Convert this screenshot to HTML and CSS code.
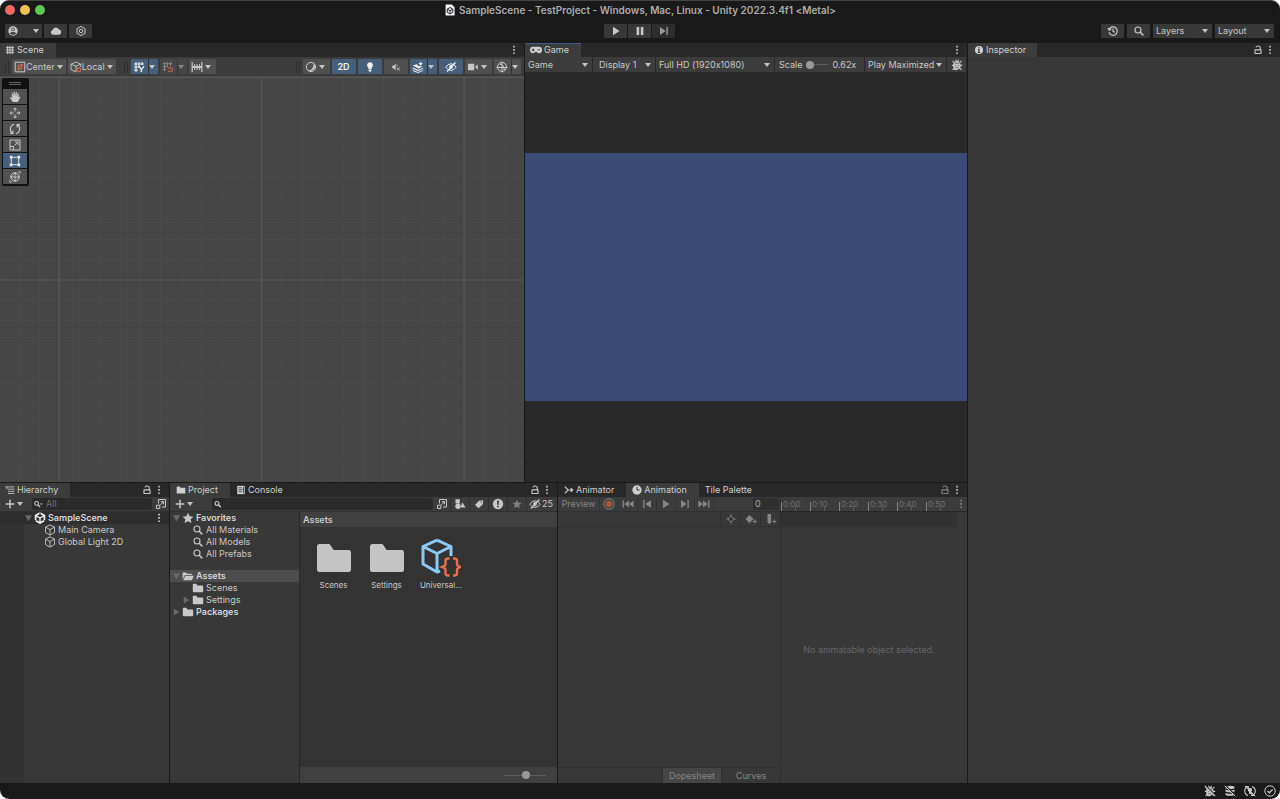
FILE: index.html
```html
<!DOCTYPE html>
<html lang="en">
<head>
  <meta charset="UTF-8">
  <title>SampleScene - TestProject - Windows, Mac, Linux - Unity 2022.3.4f1 &lt;Metal&gt;</title>
  <link rel="stylesheet" href="styles.css">
</head>
<body>
  <svg class="sprite" aria-hidden="true">
    <symbol id="i-user" viewBox="0 0 12 12"><circle cx="6" cy="6" r="4.7" fill="currentColor"/><circle cx="6" cy="4.4" r="1.8" fill="#383838"/><path d="M2.8 8.6Q3 6.9 6 6.9T9.2 8.6L8.2 9.3Q6 10.2 3.8 9.3z" fill="#383838"/><circle cx="6" cy="4.4" r="1.1" fill="currentColor"/></symbol>
    <symbol id="i-cloud" viewBox="0 0 12 12"><path d="M3 9.8a2.5 2.5 0 0 1-.3-4.9A3.3 3.3 0 0 1 8.7 4.2a2.9 2.9 0 0 1 .6 5.6z" fill="currentColor"/></symbol>
    <symbol id="i-hex" viewBox="0 0 12 12"><path d="M6 1.4L10 3.7v4.6L6 10.600 2 8.3V3.7z" fill="none" stroke="currentColor"/><circle cx="6" cy="6" r="1.8" fill="none" stroke="currentColor"/></symbol>
    <symbol id="i-play" viewBox="0 0 12 12"><path d="M3 1.8v8.4L9.5 6z" fill="currentColor"/></symbol>
    <symbol id="i-pause" viewBox="0 0 12 12"><path d="M2.6 2h2.6v8H2.6zM6.8 2h2.6v8H6.8z" fill="currentColor"/></symbol>
    <symbol id="i-next" viewBox="0 0 12 12"><path d="M2 2v8l5.6-4zM8.4 2h1.4v8H8.4z" fill="currentColor"/></symbol>
    <symbol id="i-prev" viewBox="0 0 12 12"><path d="M10 2v8L4.4 6zM2.2 2h1.4v8H2.2z" fill="currentColor"/></symbol>
    <symbol id="i-first" viewBox="0 0 12 12"><path d="M11.6 2.4v7.2L7 6zM7 2.4v7.2L2.2 6zM.6 2.4h1.3v7.2H.6z" fill="currentColor"/></symbol>
    <symbol id="i-last" viewBox="0 0 12 12"><path d="M.4 2.4v7.2L5 6zM5 2.4v7.2L9.8 6zM10.1 2.4h1.3v7.2h-1.3z" fill="currentColor"/></symbol>
    <symbol id="i-history" viewBox="0 0 12 12"><path d="M2.3 4.2A4.2 4.2 0 1 1 2 7.2M1 3l1.1 2.2L4.3 4M6 3.5v2.8l2 1" fill="none" stroke="currentColor" stroke-width="1.2"/></symbol>
    <symbol id="i-search" viewBox="0 0 12 12"><circle cx="5" cy="5" r="3" fill="none" stroke="currentColor" stroke-width="1.1"/><path d="M7.2 7.2l3.2 3.2" stroke="currentColor" stroke-width="1.5"/></symbol>
    <symbol id="i-find" viewBox="0 0 12 12"><circle cx="5" cy="5.4" r="1.9" fill="none" stroke="currentColor" stroke-width="1.2"/><path d="M6.4 6.8l2.4 2.4" stroke="currentColor" stroke-width="1.5"/></symbol>
    <symbol id="i-finddrop" viewBox="0 0 12 12"><circle cx="4.6" cy="5.4" r="1.9" fill="none" stroke="currentColor" stroke-width="1.1"/><path d="M6 6.8l2 2.2" stroke="currentColor" stroke-width="1.3"/><path d="M8 5.4h2.8L9.4 7z" fill="currentColor"/></symbol>
    <symbol id="i-hash" viewBox="0 0 12 12"><path d="M3.2 1v10M6 1v10M8.8 1v10M1 3.2h10M1 6h10M1 8.8h10" stroke="currentColor" stroke-width="1.1"/></symbol>
    <symbol id="i-kebab" viewBox="0 0 12 12"><path d="M5.2 1.8h1.6v1.7H5.2zM5.2 5.1h1.6v1.7H5.2zM5.2 8.4h1.6v1.7H5.2z" fill="currentColor"/></symbol>
    <symbol id="i-lock" viewBox="0 0 12 12"><path d="M4 3.400Q4.200 2 6 2q2.300 0 2.300 2v2" fill="none" stroke="currentColor" stroke-width="1.100"/><path d="M3 5.900h6v3.600H3z" fill="none" stroke="currentColor" stroke-width="1.100" stroke-linejoin="round"/></symbol>
    <symbol id="i-center" viewBox="0 0 12 12"><path d="M1.2 1.2h9.6v9.6H1.2z" fill="none" stroke="currentColor"/><path d="M4 4.500L8 3.500 7.500 7.500 4.500 8.500z" fill="none" stroke="#e06a4b" stroke-width="1.100"/><path d="M3 9.300L9 3" stroke="#e06a4b" stroke-width=".8"/></symbol>
    <symbol id="i-cube" viewBox="0 0 12 12"><path d="M6 .9l4.5 2.2v5.4L6 11.1 1.5 8.5V3.1zM1.5 3.1L6 5.6l4.5-2.5M6 5.6v5.5" fill="none" stroke="currentColor" stroke-width=".9" stroke-linejoin="round"/></symbol>
    <symbol id="i-local" viewBox="0 0 12 12"><path d="M6 8v3L1 8.6V3.2L6 1l4.8 2.2V6M1 3.2l5 2 4.8-2M6 5.2V8" fill="none" stroke="currentColor" stroke-width=".9"/><circle cx="8.8" cy="8.8" r="1.9" fill="none" stroke="#e06a4b" stroke-width="1.1"/></symbol>
    <symbol id="i-gridy" viewBox="0 0 12 12"><path d="M3 1v10M6 1v5M9 1v3M1 3h10M1 6h6M1 9h4" stroke="currentColor" stroke-width="1.1"/><path d="M6 5.4l2.4 3V11M11 5.4L8.4 8.4" fill="none" stroke="currentColor" stroke-width="1.4"/></symbol>
    <symbol id="i-snap" viewBox="0 0 12 12"><path d="M2.5 1v9M5.5 1v5M8.5 1v4M.8 2.7h9.500M.8 5.7h5M.8 8.7H4" stroke="currentColor"/><path d="M6 7h3a1.6 1.6 0 0 1 0 3.4H6" fill="none" stroke="#b85a45" stroke-width="1.3"/></symbol>
    <symbol id="i-ruler" viewBox="0 0 12 12"><path d="M1.2 1v10M10.8 1v10" stroke="currentColor" stroke-width="1.200"/><path d="M1.200 6h9.600" stroke="currentColor" stroke-width="2"/><path d="M3.600 3v6M6 3v6M8.400 3v6" stroke="currentColor"/></symbol>
    <symbol id="i-shade" viewBox="0 0 12 12"><circle cx="6" cy="6" r="4.6" fill="none" stroke="currentColor"/><path d="M8.6 1.8A4.6 4.6 0 1 1 2 8.7q2 1 4.5-.5t2.1-6.4z" fill="currentColor"/></symbol>
    <symbol id="i-bulb" viewBox="0 0 12 12"><path d="M6 1.200a3 3 0 0 1 1.600 5.500V8.200H4.400V6.700A3 3 0 0 1 6 1.200zM4.600 8.800h2.800v1L6.700 10.800H5.300l-.7-1z" fill="currentColor"/></symbol>
    <symbol id="i-mute" viewBox="0 0 12 12"><path d="M1.4 4.4H3l2.6-2.2v7.6L3 7.6H1.4z" fill="currentColor"/><path d="M7 6.8l3.5 3.2M10.5 6.8L7 10M7.3 3.2v2" stroke="currentColor"/></symbol>
    <symbol id="i-fx" viewBox="0 0 12 12"><path d="M.8 4.600L4.800 3.200 6.300 5l3.500.6 1.200-.2L6.500 7.600zM.8 6.600L6 8.800l5.200-1.900v.9L6 10 .8 7.700zM.8 8.900L6 11l5.200-2v.8L6 12 .8 9.900z" fill="currentColor"/><path d="M8.600.200l.7 1.800 1.800.7-1.800.7-.7 1.800-.7-1.800-1.800-.7 1.800-.7z" fill="currentColor"/></symbol>
    <symbol id="i-eyeoff" viewBox="0 0 12 12"><path d="M.8 6.2Q3 2.8 6 2.8T11.2 6.2Q9 9.4 6 9.4T.8 6.2z" fill="none" stroke="currentColor"/><circle cx="6" cy="6" r="1.9" fill="currentColor"/><path d="M2 10.5L10.4 1.6" stroke="currentColor" stroke-width="1.4"/></symbol>
    <symbol id="i-camera" viewBox="0 0 12 12"><path d="M1 2.8h6.2v6.4H1zM8 6l2.8-2.8v5.6z" fill="currentColor"/></symbol>
    <symbol id="i-gizmo" viewBox="0 0 12 12"><circle cx="6" cy="6" r="4.5" fill="none" stroke="currentColor"/><path d="M6 .5v11M.5 6.5h11M3.5 3Q8.8 4 8.2 9.7" fill="none" stroke="currentColor"/></symbol>
    <symbol id="i-hand" viewBox="0 0 12 12"><path d="M3.8 11L1 6.8q-.2-1 1-.6L3.2 7.3 2.6 3q0-1 .9-.8l.9 3L4.5 1.1q.7-.8 1.2 0L6 5 6.8 1.2q.7-.7 1.1.1L7.7 5.3l1.2-3q.8-.4 1 .4L9.4 6.6l1.3-1.2q.8 0 .6.8L8.9 11z" fill="currentColor"/></symbol>
    <symbol id="i-move" viewBox="0 0 12 12"><path d="M6 1v3.6M6 7.4V11M1 6h3.6M7.4 6H11M4.3 2.6L6 .9l1.7 1.7M4.3 9.4L6 11.1l1.7-1.7M2.6 4.3L.9 6l1.7 1.7M9.4 4.3L11.1 6 9.4 7.7" fill="none" stroke="currentColor" stroke-width="1"/></symbol>
    <symbol id="i-rotate" viewBox="0 0 12 12"><path d="M3.600 10.200A5 5 0 0 1 5 1.200M8.400 1.800A5 5 0 0 1 7 10.800M.9 10.500h3V7.500M11.100 1.500h-3v3" fill="none" stroke="currentColor" stroke-width="1.100"/></symbol>
    <symbol id="i-scale" viewBox="0 0 12 12"><path d="M1 1h10v10H1zM1 7.5h3.5V11M5.3 6.7l3.6-3.6M6 2.9h3.1V6" fill="none" stroke="currentColor" stroke-width="1"/></symbol>
    <symbol id="i-rect" viewBox="0 0 12 12"><path d="M2.3 2.3h7.4v7.4H2.3z" fill="none" stroke="currentColor" stroke-width=".9"/><path d="M.8.8h2.6v2.6H.8zM8.6.8h2.6v2.6H8.6zM.8 8.6h2.6v2.6H.8zM8.6 8.6h2.6v2.6H8.6z" fill="currentColor"/></symbol>
    <symbol id="i-transform" viewBox="0 0 12 12"><circle cx="6" cy="6" r="4.300" fill="none" stroke="currentColor" stroke-width=".9"/><path d="M6 1.6v8.8M1.6 6h8.8M4.5 3.4L6 2l1.5 1.4M4.500 8.600L6 10l1.500-1.400M3.400 4.500L2 6l1.400 1.500M8.600 4.500L10 6 8.600 7.500M9.2.8h2v2M.8 9.2v2h2" fill="none" stroke="currentColor" stroke-width=".9"/></symbol>
    <symbol id="i-pad" viewBox="0 0 12 12"><path d="M3.2 2.8h5.6a3.2 3.2 0 0 1 0 6.4Q7.5 9.2 7 8H5q-.5 1.2-1.8 1.2a3.2 3.2 0 0 1 0-6.4z" fill="currentColor"/><path d="M3.2 4.5v3M1.7 6h3M7.5 6h1M9.2 5v1.4" stroke="#3c3c3c"/></symbol>
    <symbol id="i-bug" viewBox="0 0 12 12"><path d="M1.5 2l2 1.6M10.5 2l-2 1.6M.8 6.4h10.4M1.5 10.8L4 8.5M10.5 10.8L8 8.5M4.4.8l.8 1.4M7.6.8l-.8 1.4" stroke="currentColor" stroke-width="1.100"/><path d="M6 1.7q1.8 0 2 1.6Q9.8 4.4 9.8 7T6 11 2.200 7 4 3.3q.2-1.6 2-1.6z" fill="currentColor"/><path d="M3.6 4.3h4.8M4 6.6h1.3M6.8 6.6h1.3M4.3 8.7h3.4" stroke="#3c3c3c" stroke-width=".6"/></symbol>
    <symbol id="i-info" viewBox="0 0 12 12"><circle cx="6" cy="6" r="4.8" fill="currentColor"/><path d="M6 2.7v1.5M4.8 5.5H6v3.7M4.6 9h2.8" fill="none" stroke="#3c3c3c" stroke-width="1.4"/></symbol>
    <symbol id="i-tree" viewBox="0 0 12 12"><path d="M.6 2.3h10.8M3.6 5h7.8M3.6 7.6h7.8M3.6 10.2h7.8M2.2 2.3v2.9" stroke="currentColor" stroke-width="1"/></symbol>
    <symbol id="i-pick" viewBox="0 0 12 12"><path d="M3.500 5.500V1.500h7v7.500H7M1.500 7.200h3.300v3.300H1.500zM5.500 6.800l2.800-3M5.800 3.600h2.700v2.700" fill="none" stroke="currentColor" stroke-width="1"/></symbol>
    <symbol id="i-plus" viewBox="0 0 12 12"><path d="M6 .8v10.400M.8 6h10.400" stroke="currentColor" stroke-width="1.800"/></symbol>
    <symbol id="i-unity" viewBox="0 0 12 12"><path d="M6 .9l4.400 2.500v5.200L6 11.100 1.600 8.600V3.400z" fill="none" stroke="#f0f0f0" stroke-width="1.700"/><path d="M6 6v4.500M6 6L2.300 3.900M6 6l3.700-2.100" stroke="#f0f0f0" stroke-width="1.400"/><path d="M6 0v2.400M.3 9.300l2-1.200M11.700 9.300l-2-1.200" stroke="#2d2d2d" stroke-width="1"/></symbol>
    <symbol id="i-doc" viewBox="0 0 12 12"><path d="M1.600.4h6.200l2.800 2.800v8.400h-9z" fill="#f4f4f4"/><path d="M6 3.500l2.800 1.600v3.200L6 9.900 3.200 8.300V5.100zM6 6.700v2.800M6 6.700L3.500 5.300M6 6.700l2.500-1.400" fill="none" stroke="#222"/></symbol>
    <symbol id="i-folder" viewBox="0 0 12 12"><path d="M.8 2.6q0-.8.8-.8h2.7l1.2 1.6h5q.7 0 .7.8v5.4q0 .7-.7.7H1.6q-.8 0-.8-.7z" fill="currentColor"/></symbol>
    <symbol id="i-open" viewBox="0 0 12 12"><path d="M.6 9.6V2.4h3.6l1.2 1.3h4.4v1.4H2.9z" fill="currentColor"/><path d="M3.2 5.8h8.6l-1.8 4.4H1.3z" fill="currentColor"/></symbol>
    <symbol id="i-bigfolder" viewBox="0 0 36 30"><path d="M1 3.5Q1 1 3.5 1h9.2q1 0 1.6.9l3 4.6q.3.5 1 .5h14.2Q35 7 35 9.500V26.500Q35 29 32.500 29h-29Q1 29 1 26.500z" fill="currentColor"/></symbol>
    <symbol id="i-asset" viewBox="0 0 40 40"><path d="M16 2.200L30 8.500V18M16 2.200L2 8.500V26L16 34V15.500M2 8.500L16 15.500 30 8.500M16 34L19 33" fill="none" stroke="#8ccaf5" stroke-width="3" stroke-linejoin="round"/><path d="M28.500 20.500H27q-2.500 0-2.500 2.500v3q0 2-3 3 3 1 3 3v3q0 2.500 2.500 2.500h1.500M32 20.500h1.500q2.500 0 2.500 2.500v3q0 2 3 3-3 1-3 3v3q0 2.500-2.500 2.500H32" fill="none" stroke="#e8704a" stroke-width="2.400"/></symbol>
    <symbol id="i-console" viewBox="0 0 12 12"><path d="M1.500 1h9v10h-9z" fill="currentColor"/><path d="M3 3.400h4M3 5.700h5M3 8h4M9 2v8" stroke="#333"/></symbol>
    <symbol id="i-star" viewBox="0 0 12 12"><path d="M6 .8l1.600 3.500 3.800.4-2.800 2.600.8 3.800L6 9.200l-3.400 1.900.8-3.800L.6 4.700l3.800-.4z" fill="currentColor"/></symbol>
    <symbol id="i-shapes" viewBox="0 0 12 12"><path d="M1.500 1.200h4.300v4.300H1.500zM8.300 4.200l3.200 5.300H6.600z" fill="currentColor"/><circle cx="4" cy="8.300" r="2.700" fill="currentColor"/></symbol>
    <symbol id="i-tag" viewBox="0 0 12 12"><path d="M1.200 7.200L6 2l5-.6-.4 4.900L5.500 11.200z" fill="currentColor"/><circle cx="8.500" cy="3.700" r=".8" fill="#333"/></symbol>
    <symbol id="i-warn" viewBox="0 0 12 12"><circle cx="6" cy="6" r="5.200" fill="currentColor"/><path d="M6 2.500v4.300M6 7.800v1.500" stroke="#333" stroke-width="1.600"/></symbol>
    <symbol id="i-animator" viewBox="0 0 12 12"><path d="M1 2l4 4-4 4M4.500 6h5.500M8 3.800L10.500 6 8 8.200" fill="none" stroke="currentColor" stroke-width="1.400"/></symbol>
    <symbol id="i-clock" viewBox="0 0 12 12"><circle cx="6" cy="6" r="5.600" fill="currentColor"/><path d="M6 2.200V6h3.200" fill="none" stroke="#333" stroke-width="1.200"/></symbol>
    <symbol id="i-record" viewBox="0 0 12 12"><circle cx="6" cy="6" r="5.200" fill="none" stroke="#858585"/><circle cx="6" cy="6" r="3.300" fill="#a8583e"/></symbol>
    <symbol id="i-target" viewBox="0 0 12 12"><path d="M6 2.800L9.200 6 6 9.200 2.800 6z" fill="none" stroke="currentColor" stroke-width=".9"/><path d="M6 1.300v2.700M6 8v2.700M1.300 6H4M8 6h2.700" stroke="currentColor" stroke-width=".9"/></symbol>
    <symbol id="i-key" viewBox="0 0 12 12"><path d="M4.500 2L8.500 6l-4 4-4-4z" fill="currentColor"/><path d="M9.800 6.500v4M7.800 8.500h4" stroke="currentColor"/></symbol>
    <symbol id="i-event" viewBox="0 0 12 12"><path d="M2.500 1h3.600v8.500L4.300 11 2.500 9.500z" fill="currentColor"/><path d="M9.300 6.500v4M7.300 8.500h4" stroke="currentColor"/></symbol>
    <symbol id="i-bugoff" viewBox="0 0 12 12"><use href="#i-bug"/><path d="M1.800.6l10 10" stroke="#191919" stroke-width="1.100"/><path d="M.8 .8l10.400 10.400" stroke="currentColor" stroke-width="1.100"/></symbol>
    <symbol id="i-cacheoff" viewBox="0 0 12 12"><path d="M1.500 1.500q4.500-1.500 9 0v1.800q-4.500 1.700-9 0zM1.500 4.600q4.500 1.700 9 0v2q-4.500 1.700-9 0zM1.500 7.900q4.500 1.700 9 0v2q-4.500 1.700-9 0z" fill="currentColor"/><path d="M1.800.6l10 10" stroke="#191919" stroke-width="1.100"/><path d="M.8 .8l10.400 10.400" stroke="currentColor"/></symbol>
    <symbol id="i-refreshoff" viewBox="0 0 12 12"><path d="M4 10.400a4.600 4.600 0 0 1 0-8.800M8 1.600a4.600 4.600 0 0 1 0 8.800M1 1.500h3.300v3M11 10.500H7.700v-3" fill="none" stroke="currentColor" stroke-width="1.100"/><path d="M6 3a2 2 0 0 1 1 3.800V9H5V6.800A2 2 0 0 1 6 3z" fill="currentColor"/><path d="M.8 .8l10.400 10.400" stroke="currentColor"/></symbol>
    <symbol id="i-check" viewBox="0 0 12 12"><circle cx="6" cy="6" r="5.200" fill="none" stroke="currentColor"/><path d="M3.500 6l1.900 1.800 3.200-3.300" fill="none" stroke="currentColor" stroke-width="1.300"/></symbol>
  </svg>

  <div class="window">
    <header class="titlebar">
      <div class="lights"><span class="red"></span><span class="yellow"></span><span class="green"></span></div>
      <h1><svg class="icon"><use href="#i-doc"/></svg>SampleScene - TestProject - Windows, Mac, Linux - Unity 2022.3.4f1 &lt;Metal&gt;</h1>
    </header>

    <div class="main-toolbar">
      <div class="group">
        <button class="tool account" aria-label="Account"><svg class="icon"><use href="#i-user"/></svg><i class="arrow"></i></button>
        <button class="tool" aria-label="Cloud"><svg class="icon"><use href="#i-cloud"/></svg></button>
        <button class="tool" aria-label="Services"><svg class="icon"><use href="#i-hex"/></svg></button>
      </div>
      <div class="transport">
        <button class="tool" aria-label="Play"><svg class="icon"><use href="#i-play"/></svg></button>
        <button class="tool" aria-label="Pause"><svg class="icon"><use href="#i-pause"/></svg></button>
        <button class="tool dim" aria-label="Step"><svg class="icon"><use href="#i-next"/></svg></button>
      </div>
      <div class="group end">
        <button class="tool" aria-label="Undo history"><svg class="icon"><use href="#i-history"/></svg></button>
        <button class="tool" aria-label="Search"><svg class="icon"><use href="#i-search"/></svg></button>
        <div class="drop boxed"><select aria-label="Layers"><option>Layers</option></select></div>
        <div class="drop boxed"><select aria-label="Layout"><option>Layout</option></select></div>
      </div>
    </div>

    <main class="workspace">
      <div class="docks">
        <div class="dock-top">
          <section class="panel scene">
            <div class="tabs">
              <button class="tab active"><svg class="icon small"><use href="#i-hash"/></svg>Scene</button>
              <div class="tab-menu"><button aria-label="Scene menu"><svg class="icon"><use href="#i-kebab"/></svg></button></div>
            </div>
            <div class="scene-bar">
              <i class="grip"></i>
              <button class="st"><svg class="icon"><use href="#i-center"/></svg>Center<i class="arrow"></i></button>
              <button class="st"><svg class="icon"><use href="#i-local"/></svg>Local<i class="arrow"></i></button>
              <i class="grip"></i>
              <button class="st split on" aria-label="Grid"><svg class="icon"><use href="#i-gridy"/></svg><i class="arrow"></i></button>
              <button class="st split off" aria-label="Snap"><svg class="icon"><use href="#i-snap"/></svg><i class="arrow"></i></button>
              <button class="st wide" aria-label="Increment"><svg class="icon"><use href="#i-ruler"/></svg><i class="arrow"></i></button>
              <i class="grip push"></i>
              <button class="st wide" aria-label="Draw mode"><svg class="icon"><use href="#i-shade"/></svg><i class="arrow"></i></button>
              <button class="st toggle on bold">2D</button>
              <button class="st toggle on" aria-label="Lighting"><svg class="icon"><use href="#i-bulb"/></svg></button>
              <button class="st toggle" aria-label="Audio"><svg class="icon small"><use href="#i-mute"/></svg></button>
              <button class="st split on" aria-label="Effects"><svg class="icon"><use href="#i-fx"/></svg><i class="arrow"></i></button>
              <button class="st toggle on" aria-label="Visibility"><svg class="icon"><use href="#i-eyeoff"/></svg></button>
              <button class="st wide" aria-label="Camera"><svg class="icon"><use href="#i-camera"/></svg><i class="arrow"></i></button>
              <button class="st split" aria-label="Gizmos"><svg class="icon"><use href="#i-gizmo"/></svg><i class="arrow"></i></button>
            </div>
            <div class="scene-view">
              <svg class="grid-lines" width="100%" height="100%" aria-hidden="true">
                <defs>
                  <pattern id="minor" x="59" y="0" width="20.25" height="20.25" patternUnits="userSpaceOnUse"><path d="M0 .5h20.250M.5 0v20.250" stroke="#4b4b4b" fill="none"/></pattern>
                  <pattern id="major" x="58.500" y="0" width="202.500" height="202.500" patternUnits="userSpaceOnUse"><path d="M0 .5h202.500M.5 0v202.500" stroke="#595959" fill="none"/></pattern>
                </defs>
                <rect width="100%" height="100%" fill="url(#minor)"/>
                <rect width="100%" height="100%" fill="url(#major)"/>
              </svg>
              <div class="tool-overlay">
                <i class="overlay-grip"></i>
                <button aria-label="View"><svg class="icon"><use href="#i-hand"/></svg></button>
                <button aria-label="Move"><svg class="icon"><use href="#i-move"/></svg></button>
                <button aria-label="Rotate"><svg class="icon"><use href="#i-rotate"/></svg></button>
                <button aria-label="Scale"><svg class="icon"><use href="#i-scale"/></svg></button>
                <button class="on" aria-label="Rect"><svg class="icon"><use href="#i-rect"/></svg></button>
                <button aria-label="Transform"><svg class="icon"><use href="#i-transform"/></svg></button>
              </div>
            </div>
          </section>

          <section class="panel game">
            <div class="tabs">
              <button class="tab active focus"><svg class="icon"><use href="#i-pad"/></svg>Game</button>
              <div class="tab-menu"><button aria-label="Game menu"><svg class="icon"><use href="#i-kebab"/></svg></button></div>
            </div>
            <div class="game-bar">
              <div class="drop d-view"><select aria-label="View"><option>Game</option></select></div>
              <div class="drop d-display"><select aria-label="Display"><option>Display 1</option></select></div>
              <div class="drop d-size"><select aria-label="Resolution"><option>Full HD (1920x1080)</option></select></div>
              <div class="scale"><label for="scale">Scale</label><input type="range" id="scale" min="0" max="100" value="0"><span>0.62x</span></div>
              <div class="drop d-play"><select aria-label="Play mode"><option>Play Maximized</option></select></div>
              <button class="bug" aria-label="Frame debugger"><svg class="icon"><use href="#i-bug"/></svg></button>
            </div>
            <div class="game-view"><div class="frame"></div></div>
          </section>
        </div>

        <div class="dock-bottom">
          <section class="panel hierarchy">
            <div class="tabs">
              <button class="tab active"><svg class="icon small"><use href="#i-tree"/></svg>Hierarchy</button>
              <div class="tab-menu"><button aria-label="Lock"><svg class="icon"><use href="#i-lock"/></svg></button><button aria-label="Hierarchy menu"><svg class="icon"><use href="#i-kebab"/></svg></button></div>
            </div>
            <div class="sub-bar">
              <button class="add" aria-label="Create"><svg class="icon small"><use href="#i-plus"/></svg><i class="arrow"></i></button>
              <label class="search"><svg class="icon"><use href="#i-finddrop"/></svg><input type="text" placeholder="All" aria-label="Search hierarchy"></label>
              <button class="picker" aria-label="Open search"><svg class="icon"><use href="#i-pick"/></svg></button>
            </div>
            <ul class="tree">
              <li class="root"><i class="fold open"></i><svg class="icon"><use href="#i-unity"/></svg><b>SampleScene</b><button aria-label="Scene options"><svg class="icon"><use href="#i-kebab"/></svg></button></li>
              <li class="leaf"><svg class="icon"><use href="#i-cube"/></svg>Main Camera</li>
              <li class="leaf"><svg class="icon"><use href="#i-cube"/></svg>Global Light 2D</li>
            </ul>
          </section>

          <section class="panel project">
            <div class="tabs">
              <button class="tab active"><svg class="icon small"><use href="#i-folder"/></svg>Project</button>
              <button class="tab"><svg class="icon small"><use href="#i-console"/></svg>Console</button>
              <div class="tab-menu"><button aria-label="Lock"><svg class="icon"><use href="#i-lock"/></svg></button><button aria-label="Project menu"><svg class="icon"><use href="#i-kebab"/></svg></button></div>
            </div>
            <div class="sub-bar">
              <button class="add" aria-label="Create"><svg class="icon small"><use href="#i-plus"/></svg><i class="arrow"></i></button>
              <label class="search far"><svg class="icon"><use href="#i-find"/></svg><input type="text" aria-label="Search project"></label>
              <button class="picker" aria-label="Open search"><svg class="icon"><use href="#i-pick"/></svg></button>
              <button class="filter" aria-label="Filter by type"><svg class="icon"><use href="#i-shapes"/></svg></button>
              <button class="filter" aria-label="Filter by label"><svg class="icon small"><use href="#i-tag"/></svg></button>
              <button class="filter" aria-label="Import log"><svg class="icon"><use href="#i-warn"/></svg></button>
              <button class="filter muted" aria-label="Save search"><svg class="icon small"><use href="#i-star"/></svg></button>
              <button class="filter hidden-count"><svg class="icon"><use href="#i-eyeoff"/></svg>25</button>
            </div>
            <div class="project-body">
              <ul class="folders">
                <li><i class="fold open"></i><svg class="icon"><use href="#i-star"/></svg><b>Favorites</b></li>
                <li class="child"><svg class="icon"><use href="#i-search"/></svg>All Materials</li>
                <li class="child"><svg class="icon"><use href="#i-search"/></svg>All Models</li>
                <li class="child"><svg class="icon"><use href="#i-search"/></svg>All Prefabs</li>
                <li class="selected"><i class="fold open"></i><svg class="icon"><use href="#i-open"/></svg><b>Assets</b></li>
                <li class="child"><svg class="icon"><use href="#i-folder"/></svg>Scenes</li>
                <li class="child folded"><i class="fold"></i><svg class="icon"><use href="#i-folder"/></svg>Settings</li>
                <li><i class="fold"></i><svg class="icon"><use href="#i-folder"/></svg><b>Packages</b></li>
              </ul>
              <div class="browser">
                <h2>Assets</h2>
                <div class="assets">
                  <figure><svg class="big"><use href="#i-bigfolder"/></svg><figcaption>Scenes</figcaption></figure>
                  <figure><svg class="big"><use href="#i-bigfolder"/></svg><figcaption>Settings</figcaption></figure>
                  <figure><svg class="big"><use href="#i-asset"/></svg><figcaption>Universal...</figcaption></figure>
                </div>
                <div class="browser-foot"><input type="range" min="0" max="100" value="52" aria-label="Icon size"></div>
              </div>
            </div>
          </section>

          <section class="panel animation">
            <div class="tabs">
              <button class="tab"><svg class="icon small"><use href="#i-animator"/></svg>Animator</button>
              <button class="tab active"><svg class="icon small"><use href="#i-clock"/></svg>Animation</button>
              <button class="tab">Tile Palette</button>
              <div class="tab-menu"><button class="muted" aria-label="Lock"><svg class="icon"><use href="#i-lock"/></svg></button><button aria-label="Animation menu"><svg class="icon"><use href="#i-kebab"/></svg></button></div>
            </div>
            <div class="anim-body">
              <div class="anim-left">
                <div class="anim-bar">
                  <button class="preview">Preview</button>
                  <button aria-label="Record"><svg class="icon"><use href="#i-record"/></svg></button>
                  <button aria-label="First frame"><svg class="icon"><use href="#i-first"/></svg></button>
                  <button aria-label="Previous key"><svg class="icon"><use href="#i-prev"/></svg></button>
                  <button aria-label="Play clip"><svg class="icon"><use href="#i-play"/></svg></button>
                  <button aria-label="Next key"><svg class="icon"><use href="#i-next"/></svg></button>
                  <button aria-label="Last frame"><svg class="icon"><use href="#i-last"/></svg></button>
                  <input type="text" value="0" aria-label="Frame">
                </div>
                <div class="key-bar">
                  <button aria-label="Filter by selection"><svg class="icon"><use href="#i-target"/></svg></button>
                  <button aria-label="Add keyframe"><svg class="icon"><use href="#i-key"/></svg></button>
                  <button aria-label="Add event"><svg class="icon"><use href="#i-event"/></svg></button>
                </div>
                <div class="anim-list"></div>
                <div class="anim-foot"><button class="on">Dopesheet</button><button>Curves</button></div>
              </div>
              <div class="timeline">
                <div class="ruler">
                  <span>0:00</span><span>0:10</span><span>0:20</span><span>0:30</span><span>0:40</span><span>0:50</span>
                  <button aria-label="Timeline menu"><svg class="icon"><use href="#i-kebab"/></svg></button>
                </div>
                <div class="event-row"></div>
                <div class="sheet"><p>No animatable object selected.</p></div>
              </div>
            </div>
          </section>
        </div>
      </div>

      <aside class="panel inspector">
        <div class="tabs">
          <button class="tab active"><svg class="icon small"><use href="#i-info"/></svg>Inspector</button>
          <div class="tab-menu"><button aria-label="Lock"><svg class="icon"><use href="#i-lock"/></svg></button><button aria-label="Inspector menu"><svg class="icon"><use href="#i-kebab"/></svg></button></div>
        </div>
      </aside>
    </main>

    <footer class="status">
      <button aria-label="Debug off"><svg class="icon"><use href="#i-bugoff"/></svg></button>
      <button aria-label="Cache server off"><svg class="icon"><use href="#i-cacheoff"/></svg></button>
      <button aria-label="Auto lighting off"><svg class="icon"><use href="#i-refreshoff"/></svg></button>
      <button aria-label="Progress"><svg class="icon"><use href="#i-check"/></svg></button>
    </footer>
  </div>
</body>
</html>
```
FILE: styles.css
```css
* {
  box-sizing: border-box;
}
body {
  margin: 0;
  background: #fff;
  font-family: Inter, "Liberation Sans", sans-serif;
  font-size: 9px;
  font-feature-settings: "calt" 0;
  line-height: 12px;
  color: #c8c8c8;
}
button, input, select {
  font: inherit;
  font-feature-settings: inherit;
  color: inherit;
  margin: 0;
  padding: 0;
  border: 0;
  border-radius: 0;
  background: none;
}
button {
  display: flex;
  align-items: center;
  justify-content: center;
}
ul, h1, h2, p, figure {
  margin: 0;
  padding: 0;
  list-style: none;
}
.sprite {
  position: absolute;
  width: 0;
  height: 0;
}
.icon {
  width: 12px;
  height: 12px;
  flex: none;
}
.small {
  width: 10px;
  height: 10px;
}
.arrow {
  border: 3px solid transparent;
  border-top: 4px solid #c4c4c4;
  border-bottom: 0;
  flex: none;
}

/* window frame */
.window {
  height: 100vh;
  display: flex;
  flex-direction: column;
  background: #191919;
  border-radius: 9px;
  border-top: 1px solid #444;
  overflow: hidden;
}
.titlebar {
  display: grid;
  grid-template-columns: 1fr auto 1fr;
  align-items: center;
  height: 18px;
  padding: 0 5px;
}
.titlebar h1 {
  display: flex;
  align-items: center;
  gap: 3px;
  font-size: 10px;
  font-weight: 600;
  color: #acacac;
}
.lights {
  display: flex;
  gap: 5px;
}
.lights span {
  width: 10px;
  height: 10px;
  border-radius: 50%;
}
.red { background: #ed6a5e; }
.yellow { background: #f5bf4f; }
.green { background: #61c554; }

.main-toolbar {
  display: grid;
  grid-template-columns: 1fr auto 1fr;
  align-items: center;
  height: 24px;
  padding: 0 6px 0 5px;
}
.group {
  display: flex;
  gap: 2px;
}
.end {
  justify-content: flex-end;
  gap: 3px;
}
.transport {
  display: flex;
  gap: 1px;
}
.tool {
  width: 23px;
  height: 14px;
  background: #383838;
  border-radius: 1px;
}
.account {
  width: 37px;
  justify-content: space-between;
  padding: 0 3px 0 2px;
}
.dim {
  background: #2d2d2d;
  color: #999;
}
.drop {
  display: flex;
  align-items: center;
  position: relative;
}
.drop select {
  appearance: none;
  width: 100%;
  height: 14px;
  padding: 0 3px;
  outline: 0;
}
.drop::after {
  content: "";
  position: absolute;
  right: 4px;
  border: 3px solid transparent;
  border-top: 4px solid #c4c4c4;
  border-bottom: 0;
  pointer-events: none;
}
.boxed {
  width: 59px;
  background: #383838;
}

/* docking areas */
.workspace {
  flex: 1;
  min-height: 0;
  display: grid;
  grid-template-columns: 967fr 312fr;
  gap: 1px;
}
.docks {
  display: grid;
  grid-template-rows: 439fr 300fr;
  gap: 1px;
  min-height: 0;
}
.dock-top, .dock-bottom {
  display: grid;
  gap: 1px;
  min-height: 0;
}
.dock-top {
  grid-template-columns: 524fr 442fr;
}
.dock-bottom {
  grid-template-columns: 169fr 387fr 409fr;
}
.panel {
  display: flex;
  flex-direction: column;
  background: #383838;
  min-width: 0;
  min-height: 0;
  overflow: hidden;
}
.tabs {
  display: flex;
  height: 14px;
  background: #282828;
  flex: none;
}
.tab {
  gap: 2px;
  padding: 0 12px 0 6px;
  color: #d0d0d0;
}
.tab.active {
  background: #3c3c3c;
}
.scene .tab, .hierarchy .tab, .game .tab {
  padding-left: 5px;
}
.tab.focus {
  box-shadow: inset 0 1px #3d5f94;
}
.tab-menu {
  display: flex;
  margin-left: auto;
  padding-right: 4px;
}

/* scene */
.scene-bar {
  display: flex;
  align-items: center;
  gap: 2px;
  height: 20px;
  padding: 0 3px 0 5px;
  background: #3c3c3c;
  border-bottom: 1px solid #4a4a4a;
  flex: none;
}
.grip {
  width: 4px;
  height: 12px;
  margin-right: 1px;
  border: solid #2e2e2e;
  border-width: 0 1px;
}
.st + .grip {
  margin-left: 6px;
}
.scene-bar .push {
  margin-left: auto;
}
.st {
  height: 15px;
  padding: 0 3px 0 2px;
  background: #505050;
  border-radius: 1px;
}
.st .arrow {
  margin-left: 2px;
}
.wide, .split {
  width: 27px;
  justify-content: space-between;
}
.wide {
  padding-right: 5px;
}
.st.wide .arrow, .st.split .arrow {
  margin: 0;
}
.split {
  background: linear-gradient(90deg, transparent 17px, #333 17px, #333 18px, transparent 18px) #505050;
}
.toggle {
  width: 24px;
}
.on {
  background-color: #46607c;
  color: #f0f0f0;
}
.off {
  background-color: #464646;
  color: #858585;
}
.off .arrow {
  border-top-color: #858585;
}
.bold {
  font-weight: 600;
}
.scene-view {
  position: relative;
  flex: 1;
  min-height: 0;
  background: #464646;
}
.grid-lines {
  display: block;
}
.tool-overlay {
  position: absolute;
  left: 2px;
  top: 1px;
  display: flex;
  flex-direction: column;
  gap: 1px;
  width: 27px;
  padding: 1px 2px 2px 1px;
  background: #111;
  border-radius: 2px;
}
.tool-overlay button {
  height: 15px;
  background: #515151;
}
.tool-overlay .on {
  background: #46607c;
}
.overlay-grip {
  align-self: center;
  width: 12px;
  height: 3px;
  margin: 3px 0;
  border: solid #666;
  border-width: 1px 0;
}

/* game */
.game-bar {
  display: flex;
  height: 15px;
  background: #3c3c3c;
  flex: none;
}
.game-bar > * {
  border-right: 1px solid #282828;
}
.d-view { width: 68px; }
.d-display { width: 63px; }
.d-size { width: 119px; }
.d-play { width: 82px; }
.d-display select {
  padding-left: 6px;
}
.scale {
  display: flex;
  align-items: center;
  flex: 1;
  gap: 4px;
  padding-left: 4px;
}
.bug {
  width: 20px;
}
.game-view {
  flex: 1;
  display: flex;
  align-items: center;
  background: #282828;
}
.frame {
  width: 100%;
  aspect-ratio: 16 / 9;
  background: #394c75;
}
input[type="range"] {
  appearance: none;
  width: 22px;
  height: 8px;
  background: linear-gradient(#5e5e5e, #5e5e5e) center / 100% 1px no-repeat;
}
input[type="range"]::-webkit-slider-thumb {
  appearance: none;
  width: 8px;
  height: 8px;
  border-radius: 50%;
  background: #999;
}

/* hierarchy */
.sub-bar {
  display: flex;
  align-items: center;
  height: 15px;
  background: #3c3c3c;
  border-bottom: 1px solid #303030;
  flex: none;
}
.add {
  gap: 2px;
  padding: 0 4px 0 5px;
  margin-right: 5px;
}
.search {
  display: flex;
  align-items: center;
  flex: 1;
  min-width: 0;
  height: 12px;
  background: #2a2a2a;
  border-radius: 2px;
}
.far {
  margin-left: 10px;
}
.search input {
  width: 100%;
  min-width: 0;
  padding-left: 2px;
  outline: 0;
}
.search input::placeholder {
  color: #707070;
}
.picker {
  width: 17px;
}
.tree {
  flex: 1;
  background: linear-gradient(90deg, #323232 24px, #383838 24px);
}
.tree li, .folders li {
  display: flex;
  align-items: center;
  gap: 2px;
  height: 12px;
}
.tree .root {
  background: #2d2d2d;
  padding: 0 4px 0 25px;
  color: #d6d6d6;
}
.root button {
  margin-left: auto;
}
.tree .leaf {
  padding-left: 44px;
}
b {
  font-weight: 600;
  color: #d6d6d6;
}
.fold {
  width: 7px;
  height: 7px;
  background: #696969;
  clip-path: polygon(10% 0, 90% 50%, 10% 100%);
}
.fold.open {
  clip-path: polygon(0 10%, 100% 10%, 50% 100%);
}

/* project */
.filter {
  align-self: stretch;
  width: 19px;
  border-left: 1px solid #303030;
}
.hidden-count {
  width: 31px;
  justify-content: flex-end;
  gap: 1px;
  padding-right: 4px;
}
.muted {
  color: #808080;
}
.project-body {
  flex: 1;
  display: flex;
  min-height: 0;
}
.folders {
  width: 130px;
  border-right: 1px solid #282828;
}
.folders li {
  padding-left: 3px;
}
.folders .child {
  padding-left: 22px;
}
.folders .folded {
  padding-left: 13px;
}
.folders .selected {
  margin-top: 10px;
  background: #4d4d4d;
}
.browser {
  flex: 1;
  display: flex;
  flex-direction: column;
  background: #333;
}
.browser h2 {
  font-size: 9px;
  font-weight: 600;
  line-height: 15px;
  padding-left: 3px;
  background: #404040;
}
.assets {
  flex: 1;
  display: flex;
  padding: 11px 0 0 7px;
}
.assets figure {
  display: flex;
  flex-direction: column;
  align-items: center;
  gap: 1px;
  width: 53px;
}
.assets figure:last-child {
  width: 56px;
}
.big {
  width: 40px;
  height: 40px;
  color: #c4c4c4;
}
.assets figure:not(:last-child) .big {
  width: 36px;
}
figcaption {
  font-size: 8px;
}
.browser-foot {
  display: flex;
  justify-content: flex-end;
  align-items: center;
  height: 16px;
  padding-right: 11px;
  background: #404040;
}
.browser-foot input[type="range"] {
  width: 42px;
}

/* animation */
.anim-body {
  flex: 1;
  display: grid;
  grid-template-columns: 223fr 186fr;
  color: #858585;
}
.anim-left {
  display: flex;
  flex-direction: column;
  border-right: 1px solid #2e2e2e;
}
.anim-bar, .key-bar {
  display: flex;
  height: 15px;
  border-bottom: 1px solid #303030;
}
.anim-bar {
  background: #3c3c3c;
}
.anim-bar button {
  width: 19px;
  border-right: 1px solid #333;
}
.anim-bar .preview {
  width: 42px;
}
.anim-bar input {
  width: 26px;
  margin: 1px 1px 1px auto;
  padding-left: 2px;
  background: #303030;
  color: #aaa;
}
.key-bar {
  justify-content: flex-end;
}
.key-bar button {
  width: 20px;
  border-left: 1px solid #303030;
}
.anim-list {
  flex: 1;
}
.anim-foot {
  display: flex;
  justify-content: flex-end;
  height: 16px;
  border-top: 1px solid #303030;
}
.anim-foot button {
  width: 59px;
  border-left: 1px solid #303030;
}
.anim-foot .on {
  background: #464646;
  color: inherit;
}
.timeline {
  display: flex;
  flex-direction: column;
}
.ruler {
  display: grid;
  grid-template-columns: repeat(6, 59fr) 24fr;
  height: 15px;
  background: #3c3c3c;
  border-bottom: 1px solid #252525;
}
.ruler span {
  font-size: 8px;
  line-height: 14px;
  padding-left: 2px;
  color: #707070;
  background:
    linear-gradient(#858585, #858585) left bottom / 1px 9px no-repeat,
    linear-gradient(#5a5a5a, #5a5a5a) center bottom / 1px 5px no-repeat;
}
.ruler button {
  width: 12px;
}
.event-row {
  height: 15px;
  margin-right: 10px;
  background: #323232;
}
.sheet {
  flex: 1;
  display: flex;
  align-items: center;
  justify-content: center;
  padding: 0 10px 10px 0;
  color: #666;
}

.inspector .tab {
  padding-right: 11px;
}
.status {
  display: flex;
  justify-content: flex-end;
  align-items: center;
  gap: 8px;
  height: 16px;
  padding-right: 4px;
  flex: none;
}
```
